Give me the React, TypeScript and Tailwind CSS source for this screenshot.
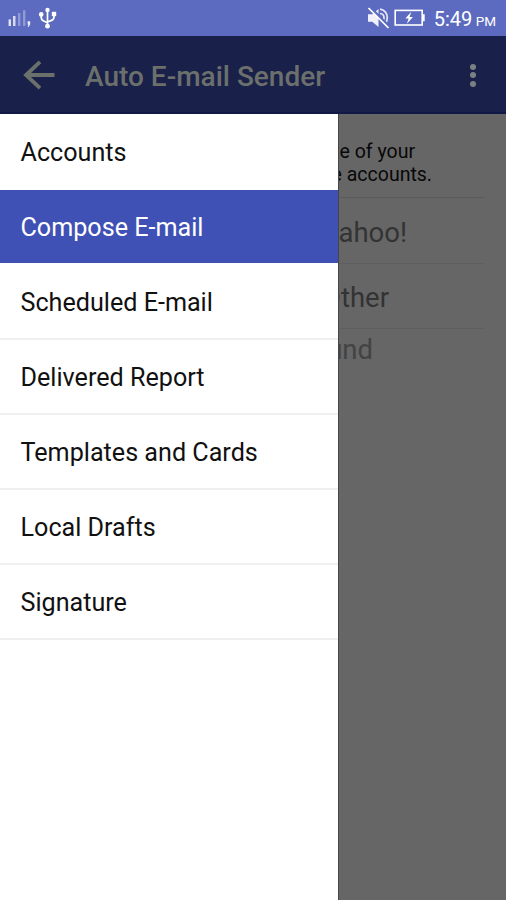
const items = [
  'Accounts',
  'Compose E-mail',
  'Scheduled E-mail',
  'Delivered Report',
  'Templates and Cards',
  'Local Drafts',
  'Signature',
];

function SignalIcon() {
  return (
    <svg width="24" height="22" viewBox="0 0 24 22" className="block" fill="#fff">
      <rect x="0.6" y="11.4" width="2.3" height="6.6" fillOpacity=".85" />
      <rect x="5" y="8" width="2.5" height="10" fillOpacity=".75" />
      <rect x="10" y="5" width="2.4" height="13" fillOpacity=".32" />
      <rect x="15" y="2.2" width="2.4" height="15.8" fillOpacity=".32" />
      <path d="M19.600 13.200h2.600v3.400l-1.600 2.400h-.9l.7-2.200h-.8z" fillOpacity=".85" />
    </svg>
  );
}

function UsbIcon() {
  return (
    <svg width="20" height="24" viewBox="0 0 20 24" className="block" fill="none" stroke="#fff" strokeWidth="1.7">
      <path d="M9.500 4v16M3.200 9v2.200c0 2.400 1 3.200 3 4l3.300 1.500M16 8.600v2.300c0 2.300-1 3-3 3.700l-3.500 1.400" />
      <circle cx="9.500" cy="4" r="2.200" fill="#fff" stroke="none" />
      <circle cx="3.200" cy="8.400" r="2.300" fill="#fff" stroke="none" />
      <rect x="13.800" y="5.800" width="4.400" height="4.400" fill="#fff" stroke="none" />
      <circle cx="9.500" cy="20.200" r="2.400" fill="#fff" stroke="none" />
    </svg>
  );
}

function MutedIcon() {
  return (
    <svg width="24" height="24" viewBox="0 0 24 24" className="block">
      <path d="M1 8.200h4.300L11.500 3v18L5.300 15.800H1z" fill="#fff" fillOpacity=".9" />
      <path d="M13 3.200c4.200.4 7.300 3.800 7.300 8.300 0 2.300-.7 4.300-1.800 5.700M13 7.500c2.500.3 4 2 4 4.300 0 1-.2 1.800-.7 2.700" fill="none" stroke="#fff" strokeWidth="1.700" strokeOpacity=".85" />
      <path d="M3.200 1.500l19 19.300" stroke="#5c6bc0" strokeWidth="3" />
      <path d="M1.500 2l20 20" stroke="#fff" strokeWidth="1.700" />
    </svg>
  );
}

function BatteryIcon() {
  return (
    <svg width="32" height="18" viewBox="0 0 32 18" className="block">
      <rect x="1.200" y="1.400" width="27" height="14.600" fill="none" stroke="#fff" strokeWidth="1.600" />
      <rect x="28.500" y="5.200" width="2.200" height="7" fill="#fff" />
      <path d="M17.300 2.800l-5.900 6.700h3.200l-1.700 5.200 6-6.700h-3.300z" fill="#fff" />
    </svg>
  );
}

export default function App() {
  return (
    <div className="flex h-[900px] w-[506px] flex-col overflow-hidden bg-[#666] font-['Roboto',sans-serif]">
      <div className="flex h-9 shrink-0 bg-[#5c6bc0] text-white">
        <div className="flex flex-1 pl-2">
          <div className="pt-[8px]"><SignalIcon /></div>
          <div className="ml-[6px] pt-[6px]"><UsbIcon /></div>
        </div>
        <div className="pt-[6px]"><MutedIcon /></div>
        <div className="ml-[3px] pt-[9px]"><BatteryIcon /></div>
        <div className="ml-[8px] mr-[10px] flex items-baseline pt-[5px] leading-7">
          <span className="w-[38px] text-[20px] leading-7">5:49</span>
          <span className="ml-[4px] text-[13.500px]">PM</span>
        </div>
      </div>

      <header className="flex h-[78px] shrink-0 items-center border-b-2 border-[#111845] bg-[#192049] text-[#6c706d]">
        <svg width="34" height="32" viewBox="0 0 34 32" className="ml-[22px] mt-[2px]" fill="none" stroke="currentColor" strokeWidth="3.800">
          <path d="M32.500 16H4M18 2.800L4 16l14 13.200" />
        </svg>
        <h1 className="ml-[29px] flex-1 whitespace-nowrap pt-[5px] text-[28px] font-medium leading-8">Auto E-mail Sender</h1>
        <div className="mr-[30px] mt-[2px] flex flex-col gap-[2.500px]">
          <i className="block size-[6px] rounded-full bg-[#798183]" />
          <i className="block size-[6px] rounded-full bg-[#798183]" />
          <i className="block size-[6px] rounded-full bg-[#798183]" />
        </div>
      </header>

      <div className="flex min-h-0 flex-1">
        <nav className="w-[338px] shrink-0 bg-white pt-px text-[25.150px] text-[#111]">
          {items.map((label, i) => (
            <div
              key={label}
              className={
                i === 1
                  ? 'flex h-[75px] items-center border-b-2 border-white bg-[#3f51b5] pl-[20.500px] pt-[3px] text-white'
                  : i === 0
                    ? 'flex h-[75px] items-center pl-[20.500px] pt-px'
                    : 'flex h-[75px] items-center border-b-2 border-[#f0f0f0] pl-[20.500px] pt-[3px]'
              }
            >
              {label}
            </div>
          ))}
        </nav>
        <main className="flex min-w-0 flex-1 flex-col overflow-hidden border-l border-[#464646] pr-[22px] text-[#333]">
          <div className="flex h-[84px] flex-col items-end border-b border-[#5b5b5b] pt-[26px] text-[19.500px] leading-[23px] text-[#080808]">
            <p className="mr-[69px] whitespace-nowrap">e of your</p>
            <p className="mr-[52px] whitespace-nowrap">e accounts.</p>
          </div>
          <div className="flex h-[66px] items-center justify-end whitespace-nowrap border-b border-[#5e5e5e] pr-[77px] pt-[5px] text-[27.500px]">ahoo!</div>
          <div className="flex h-[65px] items-center justify-end whitespace-nowrap border-b border-[#5e5e5e] pr-[95px] pt-[3px] text-[27.500px]">Other</div>
          <div className="flex h-[42px] items-center justify-end whitespace-nowrap pr-[111px] text-[27.500px] text-[#434343]">und</div>
        </main>
      </div>
    </div>
  );
}
